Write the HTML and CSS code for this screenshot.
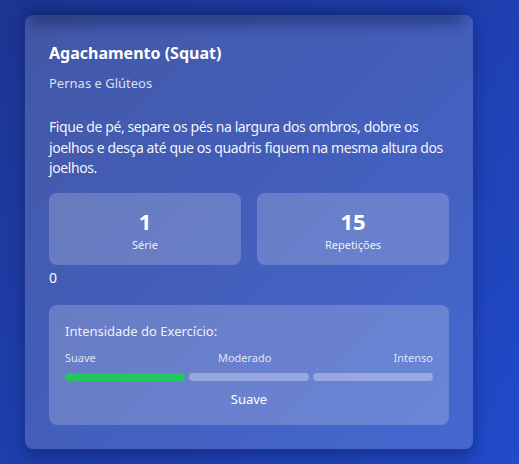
FILE: index.html
```html
<!DOCTYPE html>
<html lang="pt">
<head>
<meta charset="utf-8">
<link rel="stylesheet" href="styles.css">
</head>
<body>
<div class="page">
  <div class="prev-card"></div>
  <div class="card">
    <h2 class="title">Agachamento (Squat)</h2>
    <p class="muscles">Pernas e Glúteos</p>
    <p class="desc">Fique de pé, separe os pés na largura dos ombros, dobre os joelhos e desça até que os quadris fiquem na mesma altura dos joelhos.</p>
    <div class="stats">
      <div class="stat"><div class="stat-num">1</div><div class="stat-label">Série</div></div>
      <div class="stat"><div class="stat-num">15</div><div class="stat-label">Repetições</div></div>
    </div>
    <div class="zero">0</div>
    <div class="intensity">
      <div class="int-title">Intensidade do Exercício:</div>
      <div class="int-labels"><span>Suave</span><span>Moderado</span><span>Intenso</span></div>
      <div class="bars"><div class="bar active"></div><div class="bar"></div><div class="bar"></div></div>
      <div class="int-value">Suave</div>
    </div>
  </div>
</div>
</body>
</html>
```
FILE: styles.css
```css
* { box-sizing: border-box; }
html, body { margin: 0; padding: 0; height: 100%; }
body {
  font-family: "Noto Sans", "Open Sans", sans-serif;
  color: #fff;
  background: linear-gradient(135deg, #1c3591 0%, #1e3fae 50%, #214bcb 100%);
  overflow: hidden;
}
.page {
  padding: 0 46px 0 25px;
  position: relative;
}
.prev-card {
  height: 0;
  margin: 0 8px;
  box-shadow: 0 4px 14px 6px rgba(10, 25, 80, 0.55);
  position: absolute;
  top: -2px;
  left: 25px;
  right: 54px;
}
.card {
  margin-top: 15px;
  background: rgba(255, 255, 255, 0.17);
  border-radius: 8px;
  padding: 24px;
  box-shadow: 0 8px 16px rgba(10, 25, 80, 0.45);
}
.title {
  margin: 0;
  font-size: 16px;
  font-weight: 700;
  line-height: 28px;
}
.muscles {
  margin: 6px 0 0;
  font-size: 13px;
  line-height: 20px;
  color: rgba(255, 255, 255, 0.82);
}
.desc {
  margin: 24px 0 0;
  font-size: 14px;
  line-height: 20.5px;
  letter-spacing: -0.4px;
  color: rgba(255, 255, 255, 0.95);
}
.stats {
  margin-top: 14px;
  display: grid;
  grid-template-columns: 1fr 1fr;
  gap: 16px;
}
.stat {
  height: 72px;
  background: rgba(255, 255, 255, 0.2);
  border-radius: 8px;
  display: flex;
  flex-direction: column;
  align-items: center;
  justify-content: center;
}
.stat-num {
  font-size: 22px;
  font-weight: 700;
  line-height: 32px;
}
.stat-label {
  font-size: 11px;
  line-height: 16px;
  color: rgba(255, 255, 255, 0.9);
}
.zero {
  font-size: 14px;
  line-height: 24px;
  margin-top: 1px;
}
.intensity {
  margin-top: 15px;
  background: rgba(255, 255, 255, 0.2);
  border-radius: 8px;
  padding: 16px;
}
.int-title {
  font-size: 13px;
  line-height: 20px;
  color: rgba(255, 255, 255, 0.9);
}
.int-labels {
  margin-top: 9px;
  display: flex;
  justify-content: space-between;
  font-size: 11px;
  line-height: 16px;
  color: rgba(255, 255, 255, 0.8);
}
.bars {
  margin-top: 7px;
  display: flex;
  gap: 4px;
}
.bar {
  flex: 1;
  height: 8px;
  border-radius: 4px;
  background: rgba(255, 255, 255, 0.3);
}
.bar.active { background: #22c55e; }
.int-value {
  margin-top: 8px;
  text-align: center;
  font-size: 13px;
  line-height: 20px;
}
```
